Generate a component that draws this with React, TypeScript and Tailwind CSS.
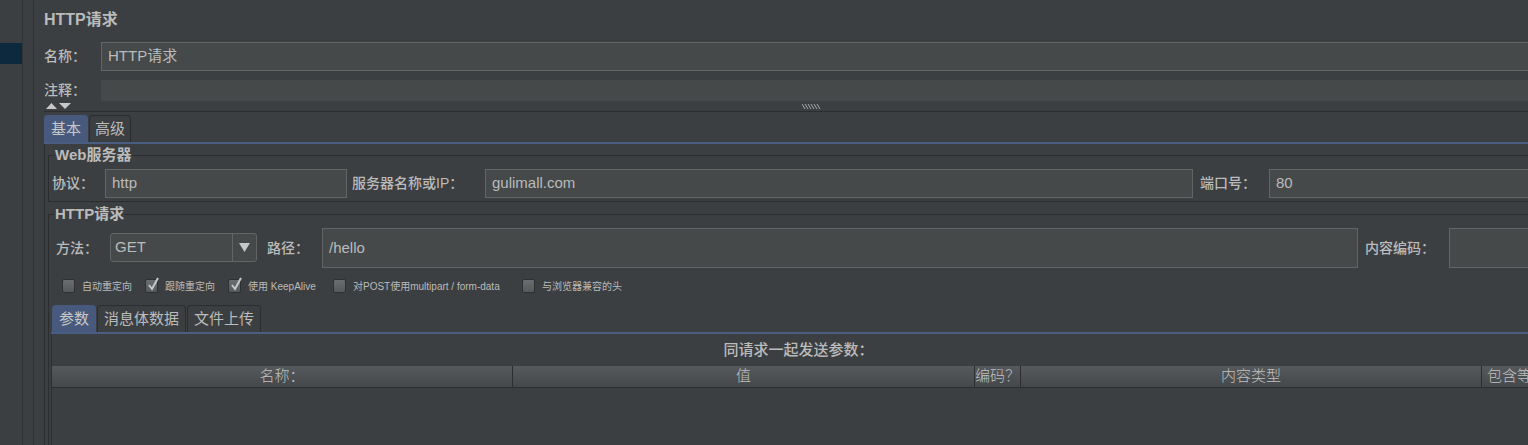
import React from 'react'

// HTTP sampler panel, dark theme
const line = 'bg-[#2b2d2f]'

const Check = ({ checked, label, w }: { checked: boolean, label: string, w: string }) => (
  <div className={`flex items-center shrink-0 ${w}`}>
    <div className="relative w-[13px] h-[14px] rounded-[2px] border border-[#2e3032] bg-gradient-to-b from-[#6b6e70] to-[#56595b]">
      {checked && (
        <svg className="absolute left-[1px] -top-[3px]" width="13" height="15" viewBox="0 0 13 15">
          <path d="M2 8 L5 12 L11 1" fill="none" stroke="#c8c8c8" strokeWidth="2" />
        </svg>
      )}
    </div>
    <span className="ml-[7px] text-[10px] text-[#bbbbbb] whitespace-nowrap">{label}</span>
  </div>
)

const Tab = ({ label, active, w }: { label: string, active?: boolean, w: string }) => (
  <div className={`${w} h-[27px] flex items-center justify-center rounded-t-[4px] border border-b-0 text-[15px] ${active ? 'bg-[#475a7d] border-[#475a7d] text-[#c8c8c8]' : 'bg-[#3c3f41] border-[#2b2d2f] text-[#bbbbbb]'}`}>
    {label}
  </div>
)

const Input = ({ value, className }: { value?: string, className: string }) => (
  <div className={`flex items-center shrink-0 bg-[#45494a] border border-[#646464] pl-[6px] text-[15px] text-[#bbbbbb] ${className}`}>
    {value}
  </div>
)

const App = () => {
  return (
    <div className="w-[1528px] h-[445px] overflow-hidden bg-[#3c3f41] text-[#bbbbbb]" style={{ fontFamily: "'Liberation Sans', 'Noto Sans CJK SC', sans-serif" }}>
      <div className="flex h-[445px] w-[1545px]">
        {/* tree on the left */}
        <div className="w-[23px] shrink-0 border-r border-[#2f3133]">
          <div className="mt-[43px] h-[21px] bg-[#0d293e]" />
        </div>
        <div className="w-[11px] shrink-0 border-r border-[#2f3133]" />

        {/* main */}
        <div className="flex-1 min-w-0">
          <div className="pl-[10px] pt-[8px] h-[32px] text-[16px] font-bold leading-[24px]">HTTP请求</div>

          <div className="flex items-center mt-[10px] pl-[10px] h-[29px]">
            <span className="w-[57px] text-[14px] font-medium">名称：</span>
            <Input value="HTTP请求" className="flex-1 h-[29px] text-[14px]" />
          </div>

          <div className="flex items-center mt-[9px] pl-[10px] h-[21px]">
            <span className="w-[57px] text-[14px] font-medium">注释：</span>
            <div className="flex-1 h-[21px] bg-[#45494a]" />
          </div>

          <div className="relative h-[10px] ml-[12px]">
            <svg className="absolute left-0 top-[2px]" width="25" height="6" viewBox="0 0 25 6">
              <path d="M0 6 L5.5 0 L11 6 Z" fill="#c8c8c8" />
              <path d="M13 0 L25 0 L19 6 Z" fill="#c8c8c8" />
            </svg>
            <svg className="absolute left-[756px] top-[3px]" width="20" height="5" viewBox="0 0 20 5">
              {[0, 3, 6, 9, 12, 15].map(x => (
                <path key={x} d={`M${x} 0 L${x + 3} 5`} stroke="#a8a8a8" strokeWidth="1" />
              ))}
            </svg>
          </div>
          <div className={`h-px ml-[10px] ${line}`} />

          {/* top tabs */}
          <div className="flex mt-[3px] ml-[10px] gap-[1px]">
            <Tab label="基本" active w="w-[44px]" />
            <Tab label="高级" w="w-[42px]" />
          </div>
          <div className="h-[2px] ml-[10px] bg-[#4a5e83]" />

          <div className="h-[302px] ml-[10px] border-l border-[#2b2d2f] pl-[3px] pt-[11px]">
            {/* Web server group */}
            <div className="relative border-l border-t border-b border-[#2b2d2f] pt-[13px] pb-[3px] pl-[3px]">
              <span className="absolute left-[5px] -top-[11px] px-[1px] bg-[#3c3f41] text-[15px] font-bold leading-[20px]">Web服务器</span>
              <div className="flex items-center h-[29px]">
                <span className="w-[53px] text-[14px] font-medium">协议：</span>
                <Input value="http" className="w-[242px] h-[29px]" />
                <span className="ml-[5px] w-[133px] text-[14px] font-medium whitespace-nowrap">服务器名称或IP：</span>
                <Input value="gulimall.com" className="w-[708px] h-[29px]" />
                <span className="ml-[7px] w-[69px] text-[14px] font-medium">端口号：</span>
                <Input value="80" className="flex-1 h-[29px]" />
              </div>
            </div>

            {/* HTTP request group */}
            <div className="relative mt-[12px] border-l border-t border-[#2b2d2f] pt-[13px] h-[300px]">
              <span className="absolute left-[5px] -top-[11px] px-[1px] bg-[#3c3f41] text-[15px] font-bold leading-[20px]">HTTP请求</span>
              <div className="flex items-start h-[40px] pl-[7px]">
                <span className="w-[54px] h-[40px] flex items-center text-[14px] font-medium">方法：</span>
                <div className="flex mt-[5px] w-[147px] h-[29px] rounded-[3px] border border-[#646464] bg-[#45494a]">
                  <span className="flex-1 flex items-center pl-[4px] text-[15px]">GET</span>
                  <div className="w-[24px] border-l border-[#646464] flex items-center justify-center">
                    <svg width="11" height="9" viewBox="0 0 11 9"><path d="M0 0 L11 0 L5.5 9 Z" fill="#c8c8c8" /></svg>
                  </div>
                </div>
                <span className="ml-[10px] w-[55px] h-[40px] flex items-center text-[14px] font-medium">路径：</span>
                <Input value="/hello" className="w-[1036px] h-[40px]" />
                <span className="ml-[7px] w-[84px] h-[40px] flex items-center text-[14px] font-medium">内容编码：</span>
                <Input className="flex-1 h-[40px]" />
              </div>

              <div className="flex items-center h-[14px] mt-[11px] pl-[13px]">
                <Check checked={false} label="自动重定向" w="w-[83px]" />
                <Check checked label="跟随重定向" w="w-[83px]" />
                <Check checked label="使用 KeepAlive" w="w-[105px]" />
                <Check checked={false} label="对POST使用multipart / form-data" w="w-[189px]" />
                <Check checked={false} label="与浏览器兼容的头" w="w-[120px]" />
              </div>

              {/* body tabs */}
              <div className="flex mt-[12px] ml-[3px] gap-[1px]">
                <Tab label="参数" active w="w-[44px]" />
                <Tab label="消息体数据" w="w-[89px]" />
                <Tab label="文件上传" w="w-[74px]" />
              </div>
              <div className="h-[2px] ml-[2px] bg-[#4a5e83]" />
              <div className="ml-[2px] border-l border-[#2b2d2f] h-[200px] overflow-hidden">
                <div className="h-[32px] flex items-center justify-center text-[15px] font-medium">同请求一起发送参数：</div>
                <div className="flex w-[1600px] h-[22px] bg-gradient-to-b from-[#565a5d] to-[#45484a] border-b border-[#2b2d2f] text-[15px] font-light text-[#c0c0c0]">
                  <div className="w-[460px] flex items-center justify-center">名称：</div>
                  <div className="w-[462px] flex items-center justify-center border-l border-[#2b2d2f]">值</div>
                  <div className="w-[46px] flex items-center justify-center border-l border-[#2b2d2f] whitespace-nowrap">编码？</div>
                  <div className="w-[461px] flex items-center justify-center border-l border-[#2b2d2f]">内容类型</div>
                  <div className="w-[86px] flex items-center justify-center border-l border-[#2b2d2f] whitespace-nowrap">包含等于？</div>
                </div>
              </div>
            </div>
          </div>
        </div>
      </div>
    </div>
  )
}

export default App
